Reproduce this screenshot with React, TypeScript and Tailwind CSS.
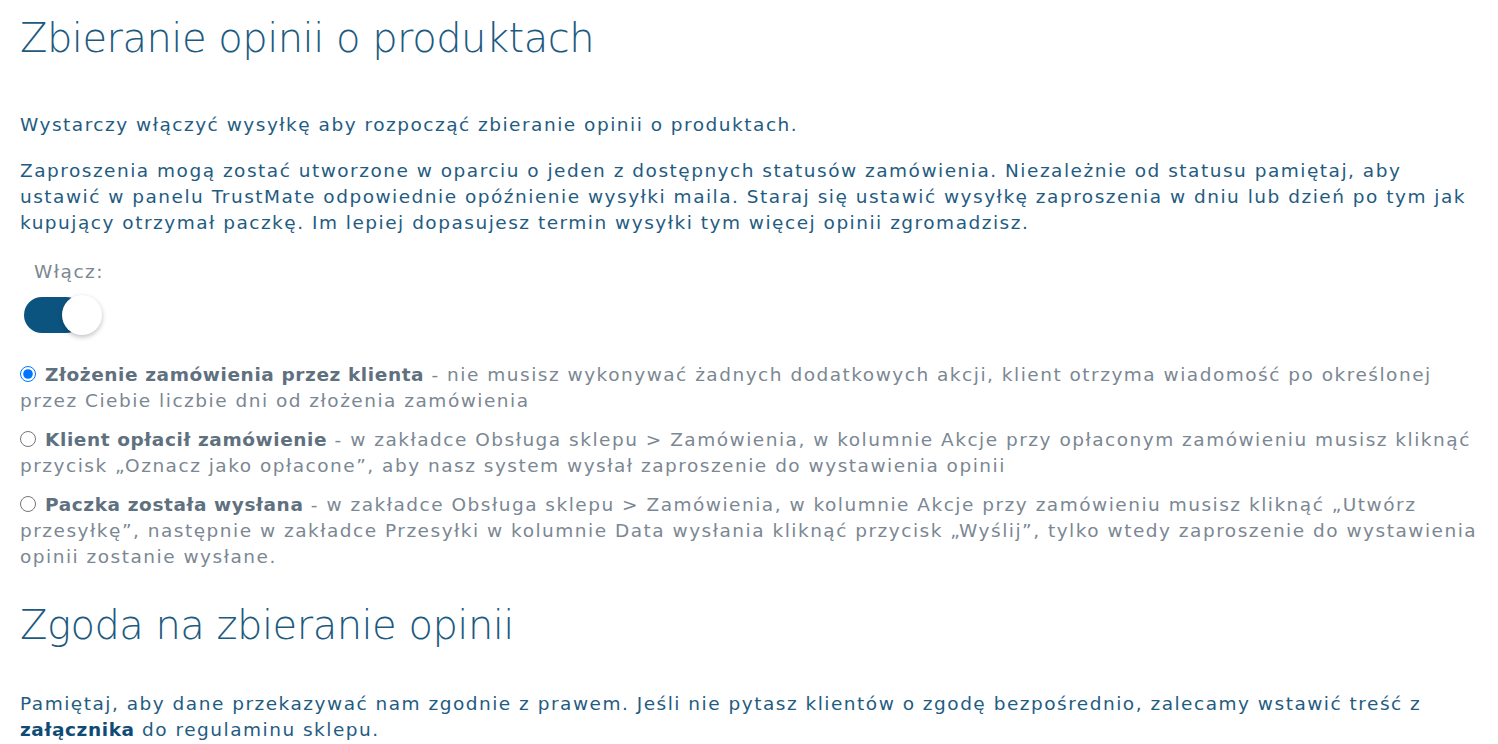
import { useState } from 'react';

const options = [
  {
    id: 'placed',
    title: 'Złożenie zamówienia przez klienta',
    text: ' - nie musisz wykonywać żadnych dodatkowych akcji, klient otrzyma wiadomość po określonej przez Ciebie liczbie dni od złożenia zamówienia',
  },
  {
    id: 'paid',
    title: 'Klient opłacił zamówienie',
    text: ' - w zakładce Obsługa sklepu > Zamówienia, w kolumnie Akcje przy opłaconym zamówieniu musisz kliknąć przycisk „Oznacz jako opłacone”, aby nasz system wysłał zaproszenie do wystawienia opinii',
  },
  {
    id: 'shipped',
    title: 'Paczka została wysłana',
    text: ' - w zakładce Obsługa sklepu > Zamówienia, w kolumnie Akcje przy zamówieniu musisz kliknąć „Utwórz przesyłkę”, następnie w zakładce Przesyłki w kolumnie Data wysłania kliknąć przycisk „Wyślij”, tylko wtedy zaproszenie do wystawienia opinii zostanie wysłane.',
  },
];

export default function App() {
  const [enabled, setEnabled] = useState(true);
  const [status, setStatus] = useState('placed');

  return (
    <div
      className="pl-5 pr-[12px] pt-[14px] bg-white text-[#1f5c82] text-[18.5px] leading-[26px] tracking-[1.5px]"
      style={{ fontFamily: '"DejaVu Sans", sans-serif' }}
    >
      <h1 className="text-[40px] leading-[48px] font-extralight tracking-[-0.5px] text-[#1d5a80]">
        Zbieranie opinii o produktach
      </h1>

      <p className="mt-[50px]">Wystarczy włączyć wysyłkę aby rozpocząć zbieranie opinii o produktach.</p>
      <p className="mt-[20px]">
        Zaproszenia mogą zostać utworzone w oparciu o jeden z dostępnych statusów zamówienia. Niezależnie od statusu
        pamiętaj, aby ustawić w panelu TrustMate odpowiednie opóźnienie wysyłki maila. Staraj się ustawić wysyłkę
        zaproszenia w dniu lub dzień po tym jak kupujący otrzymał paczkę. Im lepiej dopasujesz termin wysyłki tym więcej
        opinii zgromadzisz.
      </p>

      <div className="mt-[23px] pl-[14px] text-[#7b8793]">Włącz:</div>
      <button
        type="button"
        onClick={() => setEnabled(!enabled)}
        className="mt-[10px] ml-[4px] relative w-[78px] h-[40px] block"
      >
        <span
          className={`absolute left-0 top-[2px] w-[60px] h-[36px] rounded-full ${enabled ? 'bg-[#0c5480]' : 'bg-[#c8d0d6]'}`}
        />
        <span
          className={`absolute top-0 w-[40px] h-[40px] rounded-full bg-white shadow-[0_2px_5px_rgba(0,0,0,0.25)] ${enabled ? 'left-[38px]' : 'left-0'}`}
        />
      </button>

      <div className="mt-[27px] flex flex-col gap-[13px] text-[#7b8793]">
        {options.map((o) => (
          <label key={o.id} className="block cursor-pointer">
            <input
              type="radio"
              name="status"
              checked={status === o.id}
              onChange={() => setStatus(o.id)}
              className="w-[16px] h-[16px] mr-[9px] ml-0 align-[-1px]"
            />
            <strong className="font-bold tracking-[0.6px] text-[#5f707f]">{o.title}</strong>
            {o.text}
          </label>
        ))}
      </div>

      <h2 className="mt-[31px] text-[40px] leading-[48px] font-extralight tracking-[-0.5px] text-[#1d5a80]">
        Zgoda na zbieranie opinii
      </h2>
      <p className="mt-[42px]">
        Pamiętaj, aby dane przekazywać nam zgodnie z prawem. Jeśli nie pytasz klientów o zgodę bezpośrednio, zalecamy
        wstawić treść z <a className="font-bold tracking-[0.6px] text-[#0f4c75]">załącznika</a> do regulaminu sklepu.
      </p>
    </div>
  );
}
